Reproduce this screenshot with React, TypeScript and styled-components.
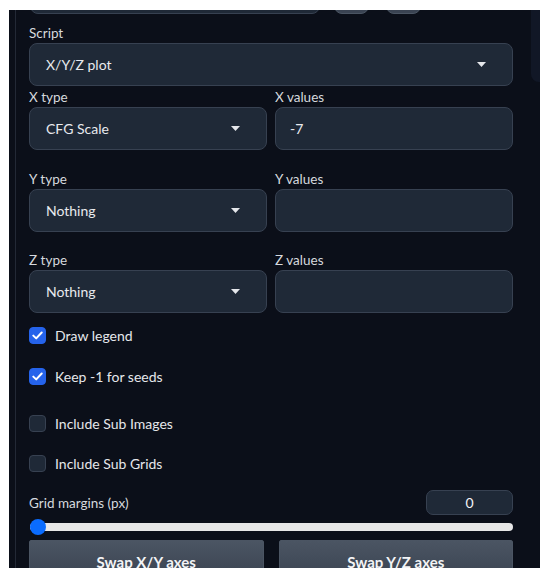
import React from "react";
import styled, { createGlobalStyle } from "styled-components";

const Global = createGlobalStyle`
  html, body { margin: 0; padding: 0; background: #ffffff; }
  body { font-family: "Lato", "Liberation Sans", sans-serif; }
  * { box-sizing: border-box; }
`;

const Frame = styled.div`
  margin: 10px 8px 0 9px;
  height: 558px;
  background: #0b0f19;
  display: flex;
  overflow: hidden;
  padding-left: 6px;
`;

const Column = styled.div`
  flex: 1;
  border-left: 1px solid #232936;
  padding: 0 18px 0 13px;
  display: flex;
  flex-direction: column;
  & > * { flex-shrink: 0; }
`;

const SidePanel = styled.div`
  width: 9px;
  height: 72px;
  background: #111726;
  border-bottom-left-radius: 8px;
  flex-shrink: 0;
`;

const TopRow = styled.div`
  display: flex;
  height: 36px;
  margin-top: -32px;
  align-items: stretch;
`;

const TopBox = styled.div<{ $w: number; $ml: number }>`
  width: ${(p) => p.$w}px;
  margin-left: ${(p) => p.$ml}px;
  background: ${(p) => (p.$w > 100 ? "#1f2937" : "#3a4352")};
  border: 1px solid ${(p) => (p.$w > 100 ? "#374151" : "#4b5563")};
  border-radius: 8px;
`;

const Field = styled.div<{ $mt: number }>`
  display: flex;
  flex-direction: column;
  margin-top: ${(p) => p.$mt}px;
  min-width: 0;
  flex: 1;
`;

const Label = styled.div`
  height: 20px;
  line-height: 20px;
  font-size: 13.5px;
  color: #d6d9de;
`;

const Pair = styled.div<{ $mt: number }>`
  display: flex;
  gap: 8px;
  margin-top: ${(p) => p.$mt}px;
`;

const Select = styled.div`
  height: 43px;
  background: #1f2937;
  border: 1px solid #374151;
  border-radius: 8px;
  display: flex;
  align-items: center;
  justify-content: space-between;
  padding: 0 26px 0 16px;
  font-size: 14px;
  color: #e8eaee;
`;

const TextBox = styled.div`
  height: 43px;
  background: #1f2937;
  border: 1px solid #374151;
  border-radius: 8px;
  display: flex;
  align-items: center;
  padding: 0 14px;
  font-size: 14px;
  color: #e8eaee;
`;

const Check = styled.label<{ $mt: number }>`
  display: flex;
  align-items: center;
  gap: 9px;
  height: 20px;
  margin-top: ${(p) => p.$mt}px;
  font-size: 14px;
  color: #e5e7eb;
`;

const Box = styled.span<{ $on: boolean }>`
  width: 17px;
  height: 17px;
  border-radius: 4px;
  background: ${(p) => (p.$on ? "#2563eb" : "#1f2937")};
  border: 1px solid ${(p) => (p.$on ? "#2563eb" : "#374151")};
  display: flex;
  align-items: center;
  justify-content: center;
`;

const SliderHead = styled.div`
  display: flex;
  align-items: center;
  justify-content: space-between;
  margin-top: 17px;
  height: 25px;
`;

const HeadLabel = styled.span`
  font-size: 13.5px;
  color: #d6d9de;
`;

const NumberBox = styled.div`
  width: 87px;
  height: 25px;
  background: #1f2937;
  border: 1px solid #374151;
  border-radius: 7px;
  display: flex;
  align-items: center;
  justify-content: center;
  font-size: 14px;
  color: #f3f4f6;
`;

const Track = styled.div`
  position: relative;
  margin-top: 8px;
  height: 8px;
  border-radius: 4px;
  background: #e7e7e7;
  margin-left: 1px;
`;

const Thumb = styled.div`
  position: absolute;
  left: 0px;
  top: -4px;
  width: 16px;
  height: 16px;
  border-radius: 50%;
  background: #0a6cff;
`;

const Buttons = styled.div`
  display: flex;
  gap: 15px;
  margin-top: 9px;
`;

const Button = styled.div`
  flex: 1;
  height: 42px;
  background: linear-gradient(to bottom, #4b5563, #394250);
  border: 1px solid #4b5563;
  border-radius: 2px;
  display: flex;
  align-items: center;
  justify-content: center;
  font-size: 15px;
  font-weight: 700;
  color: #f3f4f6;
  padding-top: 2px;
`;

const Caret = () => (
  <svg width="9" height="5" viewBox="0 0 9 5">
    <path d="M0 0 L9 0 L4.5 5 Z" fill="#e5e7eb" />
  </svg>
);

const Tick = () => (
  <svg width="11" height="9" viewBox="0 0 11 9">
    <path d="M1.3 4.6 L4.2 7.4 L9.7 1.5" stroke="#fff" strokeWidth="2" fill="none" strokeLinecap="round" strokeLinejoin="round" />
  </svg>
);

const rows = [
  { t: "X", v: "CFG Scale", val: "-7", mt: 1 },
  { t: "Y", v: "Nothing", val: "", mt: 19 },
  { t: "Z", v: "Nothing", val: "", mt: 18 },
];

export default function App() {
  return (
    <>
      <Global />
      <Frame>
        <Column>
          <TopRow>
            <TopBox $w={290} $ml={1} />
            <TopBox $w={35} $ml={14} />
            <TopBox $w={35} $ml={17} />
          </TopRow>
          <Field $mt={9}>
            <Label>Script</Label>
            <Select>
              X/Y/Z plot
              <Caret />
            </Select>
          </Field>
          {rows.map((r) => (
            <Pair key={r.t} $mt={r.mt}>
              <Field $mt={0}>
                <Label>{r.t} type</Label>
                <Select>
                  {r.v}
                  <Caret />
                </Select>
              </Field>
              <Field $mt={0}>
                <Label>{r.t} values</Label>
                <TextBox>{r.val}</TextBox>
              </Field>
            </Pair>
          ))}
          <Check $mt={12}>
            <Box $on>
              <Tick />
            </Box>
            Draw legend
          </Check>
          <Check $mt={21}>
            <Box $on>
              <Tick />
            </Box>
            Keep -1 for seeds
          </Check>
          <Check $mt={27}>
            <Box $on={false} />
            Include Sub Images
          </Check>
          <Check $mt={20}>
            <Box $on={false} />
            Include Sub Grids
          </Check>
          <SliderHead>
            <HeadLabel>Grid margins (px)</HeadLabel>
            <NumberBox>0</NumberBox>
          </SliderHead>
          <Track>
            <Thumb />
          </Track>
          <Buttons>
            <Button>Swap X/Y axes</Button>
            <Button>Swap Y/Z axes</Button>
          </Buttons>
        </Column>
        <SidePanel />
      </Frame>
    </>
  );
}
